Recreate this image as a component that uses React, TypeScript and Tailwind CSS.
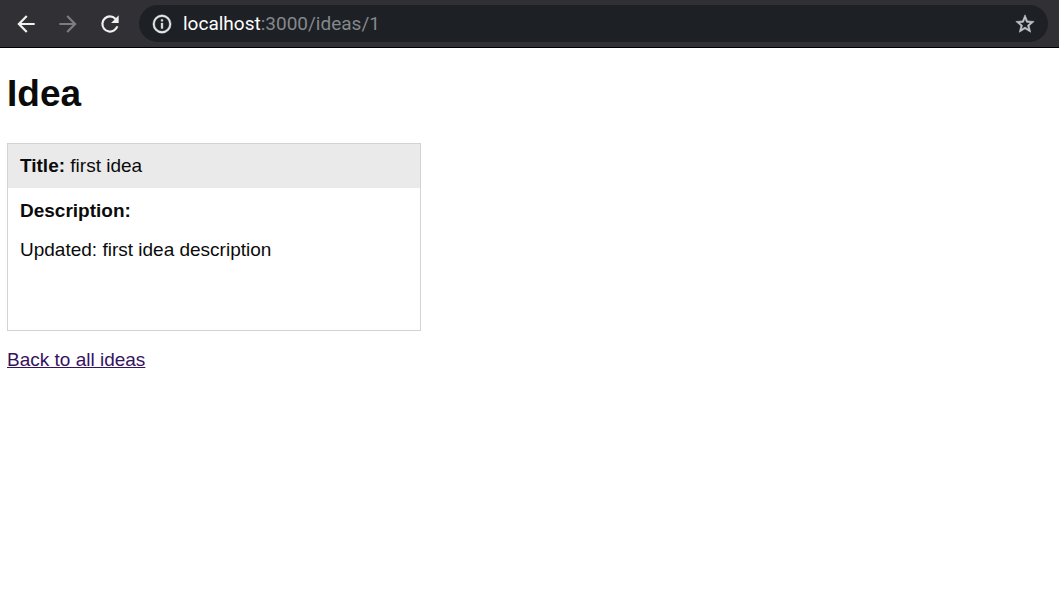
import React, { useState } from 'react';

interface IconProps {
  path: string;
  className: string;
}

const ICONS = {
  back: 'M20 11H7.83l5.59-5.59L12 4l-8 8 8 8 1.41-1.41L7.83 13H20v-2z',
  forward: 'M4 13h12.17l-5.59 5.59L12 20l8-8-8-8-1.41 1.41L16.17 11H4v2z',
  reload:
    'M17.65 6.35A7.96 7.96 0 0 0 12 4a8 8 0 1 0 7.73 10h-2.08A6 6 0 1 1 12 6c1.66 0 3.14.69 4.22 1.78L13 11h7V4l-2.35 2.35z',
  info:
    'M11 17h2v-6h-2v6zm1-15a10 10 0 1 0 0 20 10 10 0 0 0 0-20zm0 18a8 8 0 1 1 0-16 8 8 0 0 1 0 16zM11 9h2V7h-2v2z',
  star:
    'M22 9.24l-7.19-.62L12 2 9.19 8.63 2 9.24l5.46 4.73L5.82 21 12 17.27 18.18 21l-1.63-7.03L22 9.24zM12 15.4l-3.76 2.27 1-4.28-3.32-2.88 4.38-.38L12 6.1l1.71 4.04 4.38.38-3.32 2.88 1 4.28L12 15.4z',
};

const idea = {
  title: 'first idea',
  description: 'Updated: first idea description',
};

function Icon({ path, className }: IconProps) {
  return (
    <svg viewBox="0 0 24 24" fill="currentColor" className={className} aria-hidden="true">
      <path d={path} />
    </svg>
  );
}

function AddressBar() {
  const [url, setUrl] = useState('localhost:3000/ideas/1');
  const [editing, setEditing] = useState(false);

  const hostEnd = url.search(/[:/]/);
  const host = hostEnd < 0 ? url : url.slice(0, hostEnd);
  const rest = hostEnd < 0 ? '' : url.slice(hostEnd);

  return (
    <div className="flex flex-1 min-w-0 items-center h-[37px] ml-2 pl-3 pr-3 rounded-full bg-[#1d2024] font-[Roboto,sans-serif] text-[19px] leading-6">
      <button type="button" aria-label="View site information" className="text-[#e4e5e7]">
        <Icon path={ICONS.info} className="w-[22px] h-[22px] stroke-current stroke-[0.4]" />
      </button>
      {editing ? (
        <input
          autoFocus
          aria-label="Address"
          value={url}
          onChange={(e) => setUrl(e.target.value)}
          onBlur={() => setEditing(false)}
          className="flex-1 min-w-0 ml-[10px] bg-transparent text-white outline-none"
        />
      ) : (
        <button
          type="button"
          onClick={() => setEditing(true)}
          className="flex-1 min-w-0 ml-[10px] text-left truncate cursor-text text-[#85888c]"
        >
          <span className="text-white">{host}</span>
          {rest}
        </button>
      )}
      <button type="button" aria-label="Bookmark this page" className="text-[#c5c6c9]">
        <Icon path={ICONS.star} className="w-[22px] h-[22px] stroke-current stroke-[0.6]" />
      </button>
    </div>
  );
}

function Toolbar() {
  return (
    <header className="flex items-center h-12 pl-[5px] pr-[11px] bg-[#313035] border-b border-black">
      <button type="button" aria-label="Back" className="flex justify-center w-[42px] text-[#f1f1f2]">
        <Icon path={ICONS.back} className="w-[26px] h-[26px]" />
      </button>
      <button type="button" disabled aria-label="Forward" className="flex justify-center w-[42px] text-[#7d7d80]">
        <Icon path={ICONS.forward} className="w-[26px] h-[26px]" />
      </button>
      <button type="button" aria-label="Reload" className="flex justify-center w-[42px] text-[#f1f1f2]">
        <Icon path={ICONS.reload} className="w-[26px] h-[26px]" />
      </button>
      <AddressBar />
    </header>
  );
}

export default function App() {
  return (
    <div className="min-h-screen bg-white text-[#0b0b0b] font-['Liberation_Sans',Arial,sans-serif] text-[19px] leading-6">
      <Toolbar />

      <main className="px-[7px] pt-6">
        <h1 className="text-[37px] leading-[44px] font-bold">Idea</h1>

        <section className="w-full max-w-[414px] min-h-[188px] mt-[27px] border border-[#d3d3d3]">
          <div className="px-3 py-[10px] bg-[#eaeaea]">
            <strong>Title:</strong> {idea.title}
          </div>
          <div className="px-3 py-[11px]">
            <strong>Description:</strong>
            <p className="mt-[15px]">{idea.description}</p>
          </div>
        </section>

        <a href="#ideas" className="inline-block mt-[17px] text-[#37125f] underline">
          Back to all ideas
        </a>
      </main>
    </div>
  );
}
